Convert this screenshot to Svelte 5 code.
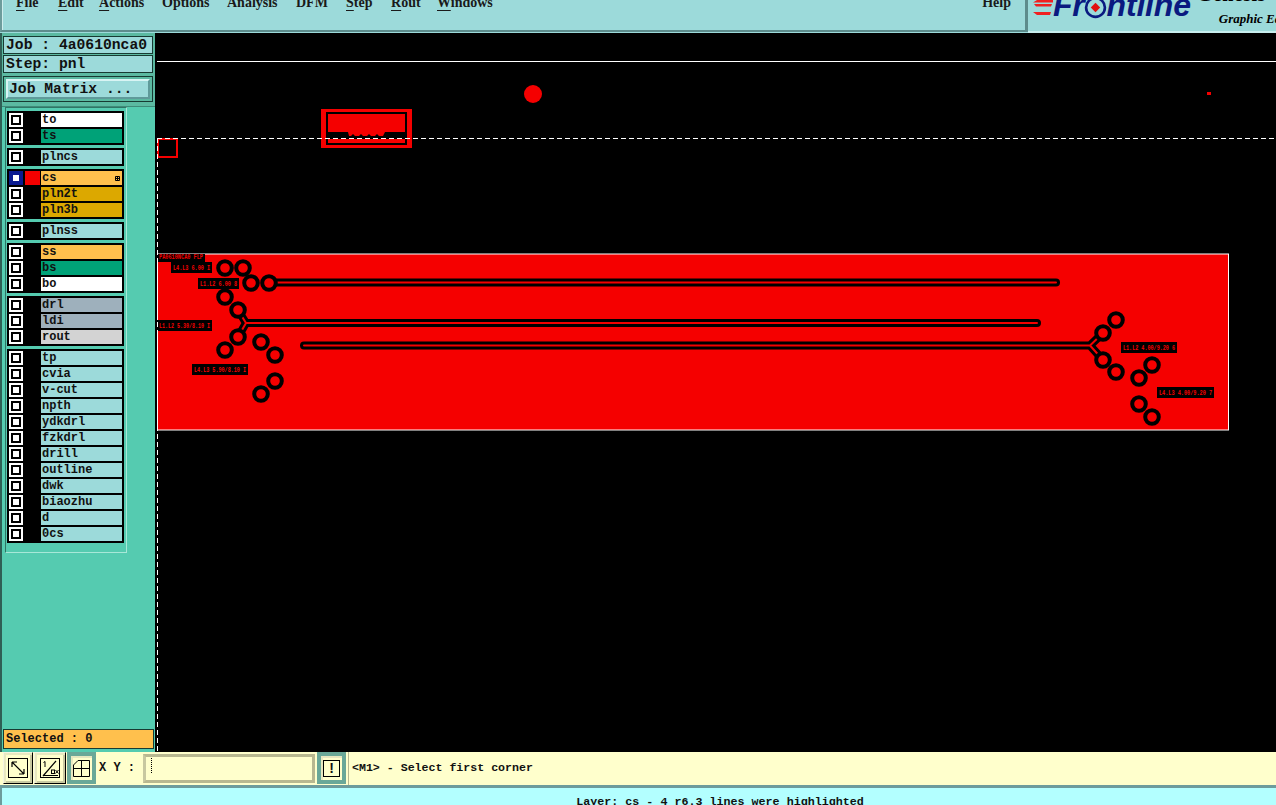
<script>
  const menus = [
    { t: 'File', u: true, w: 42 },
    { t: 'Edit', u: true, w: 41 },
    { t: 'Actions', u: true, w: 63 },
    { t: 'Options', u: false, w: 65 },
    { t: 'Analysis', u: false, w: 69 },
    { t: 'DFM', u: false, w: 50 },
    { t: 'Step', u: true, w: 45 },
    { t: 'Rout', u: true, w: 46 },
    { t: 'Windows', u: true, w: 90 }
  ];
  const groups = [
    [{ n: 'to', c: 'white' }, { n: 'ts', c: 'teal' }],
    [{ n: 'plncs', c: 'cyan' }],
    [{ n: 'cs', c: 'orange', active: true }, { n: 'pln2t', c: 'gold' }, { n: 'pln3b', c: 'gold' }],
    [{ n: 'plnss', c: 'cyan' }],
    [{ n: 'ss', c: 'orange' }, { n: 'bs', c: 'teal' }, { n: 'bo', c: 'white' }],
    [{ n: 'drl', c: 'slate' }, { n: 'ldi', c: 'slate' }, { n: 'rout', c: 'grey' }],
    ['tp', 'cvia', 'v-cut', 'npth', 'ydkdrl', 'fzkdrl', 'drill', 'outline', 'dwk', 'biaozhu', 'd', '0cs'].map((n) => ({ n, c: 'cyan' }))
  ];
  const pads = [
    [225, 268], [243, 268], [251, 283], [269, 283], [225, 297], [238, 310], [238, 337], [225, 350],
    [261, 342], [275, 355], [275, 381], [261, 394],
    [1116, 320], [1103, 333], [1103, 360], [1116, 372], [1152, 365], [1139, 378], [1139, 404], [1152, 417]
  ];
  const traces = [
    'M269 282.500H1056',
    'M238 310L246 323H1037M238 337L246 323',
    'M304 345.500H1090L1103 333M1090 345.500L1103 360'
  ];
  const labels = [
    { x: 157, y: 254, w: 48, h: 8, t: 'PA0610NCA0 FLP' },
    { x: 171, y: 262, w: 41, h: 11, t: 'L4.L3 6.00 I' },
    { x: 198, y: 278, w: 41, h: 11, t: 'L1.L2 6.00 8' },
    { x: 157, y: 320, w: 55, h: 11, t: 'L1.L2 5.30/8.10 I' },
    { x: 192, y: 364, w: 56, h: 11, t: 'L4.L3 5.90/8.10 I' },
    { x: 1121, y: 342, w: 56, h: 11, t: 'L1.L2 4.00/9.20 6' },
    { x: 1157, y: 387, w: 57, h: 11, t: 'L4.L3 4.00/9.20 7' }
  ];
</script>

<div class="app">
  <header class="top">
    <nav class="menubar">
      <div class="menus">
        {#each menus as m}
          <span class="menu" style="width:{m.w}px">{#if m.u}<u>{m.t[0]}</u>{m.t.slice(1)}{:else}{m.t}{/if}</span>
        {/each}
      </div>
      <span class="menu help">Help</span>
    </nav>
    <div class="brand">
      <svg class="stripes" width="20" height="20" viewBox="0 0 20 20">
        <path d="M4 0H20V2.500H0ZM1 4H19L18 6.500H3ZM0 12H18L17 15H4Z" fill="#f02020" />
      </svg>
      <span class="front">Fr<svg class="target" width="23" height="23" viewBox="0 0 22 22"><circle cx="11" cy="11" r="9" fill="none" stroke="#0a1a80" stroke-width="2.500" /><path d="M11 6.500L15.500 11L11 15.500L6.500 11Z" fill="#e01010" /></svg>ntline</span>
      <div class="brandtext">
        <span class="genesis">Genesis</span>
        <span class="graphic">Graphic Editor</span>
      </div>
    </div>
  </header>

  <main class="middle">
    <aside class="side">
      <div class="jobhead">
        <div class="info">Job : 4a0610nca0</div>
        <div class="info">Step: pnl</div>
        <div class="matrixframe"><button class="matrix">Job Matrix ...</button></div>
      </div>
      <div class="layerarea">
        <div class="panel">
          {#each groups as g}
            <div class="group">
              {#each g as r}
                <div class="row">
                  <span class="check" class:on={r.active}><i></i></span>
                  <span class="swatch" class:red={r.active}></span>
                  <span class="name {r.c}">{r.n}{#if r.active}<svg class="mini" width="5" height="5" viewBox="0 0 5 5"><path d="M.5.5h4v4h-4zM2.500.5v4M.5 2.500h4" fill="none" stroke="#000" /></svg>{/if}</span>
                </div>
              {/each}
            </div>
          {/each}
        </div>
      </div>
      <div class="selected">Selected : 0</div>
    </aside>

    <svg class="canvas" viewBox="157 33 1119 719" width="1119" height="719">
      <rect x="157" y="33" width="1119" height="719" fill="#000" />
      <path d="M157 61.500H1276" stroke="#fff" />
      <circle cx="533" cy="94" r="9" fill="#f50000" />
      <rect x="1207" y="92" width="4" height="3" fill="#f50000" />

      <path fill-rule="evenodd" d="M321 109H412V148H321ZM326 112V145H407V112Z" fill="#f50000" />
      <rect x="328" y="114" width="77" height="18" fill="#f50000" />
      <path d="M348 132h37l-2 4h-4l-2-2-2 2h-4l-2-2-2 2h-4l-2-2-2 2h-4l-2-2-2 2h-2Z" fill="#f50000" />
      <rect x="328" y="139" width="77" height="4" fill="#f50000" />
      <rect x="158" y="139" width="19" height="18" fill="none" stroke="#f50000" stroke-width="2" />

      <rect x="157.500" y="254" width="1071" height="176" fill="#f50000" stroke="#fff" />
      {#each traces as d}
        <path {d} fill="none" stroke="#000" stroke-width="8" stroke-linecap="round" />
        <path {d} fill="none" stroke="#f50000" stroke-width="2" stroke-linecap="round" />
      {/each}
      {#each pads as [x, y]}
        <circle cx={x} cy={y} r="6.800" fill="#f50000" stroke="#000" stroke-width="4" />
      {/each}
      {#each labels as l}
        <rect x={l.x} y={l.y} width={l.w} height={l.h} fill="#000" />
        <text class="tag" x={l.x + 2} y={l.y + l.h - 3} textLength={l.w - 4} lengthAdjust="spacingAndGlyphs">{l.t}</text>
      {/each}

      <path d="M157 138.500H1276M157.500 138V752" stroke="#fff" stroke-dasharray="5 3" />
    </svg>
  </main>

  <section class="cmd">
    <button class="tool plain">
      <svg width="20" height="20" viewBox="0 0 20 20"><rect x=".5" y=".5" width="19" height="19" fill="none" stroke="#000" /><path d="M4 4L16 16M4 4h5M4 4v5M16 16h-5M16 16v-5" fill="none" stroke="#000" stroke-width="1.200" /></svg>
    </button>
    <button class="tool plain second">
      <svg width="20" height="20" viewBox="0 0 20 20"><rect x=".5" y=".5" width="19" height="19" fill="none" stroke="#000" /><path d="M3 18L16 3M3 17.500H18" fill="none" stroke="#000" stroke-width="1.200" /><path d="M5 3.500V9M3.500 4.500L5 3.500" fill="none" stroke="#000" /><rect x="11.500" y="12" width="3" height="3.500" fill="none" stroke="#000" /><path d="M15.500 12l3 3.500M18.500 12l-3 3.500" stroke="#000" /></svg>
    </button>
    <button class="tool active">
      <svg width="17" height="17" viewBox="0 0 17 17"><path d="M5 .5H16.500V16.500H.5V5ZM8.500 .5V16.500M.5 8.500H16.500" fill="none" stroke="#000" /></svg>
    </button>
    <span class="xy">X Y :</span>
    <div class="input"><span class="caret"></span></div>
    <button class="tool active bang"><span>!</span></button>
    <div class="message">&lt;M1&gt; - Select first corner</div>
  </section>

  <footer class="status"><span>Layer: cs - 4 r6.3 lines were highlighted</span></footer>
</div>

<style>
  :global(body) { margin: 0; background: #000; overflow: hidden; }
  .app {
    width: 1276px; height: 805px; overflow: hidden;
    display: flex; flex-direction: column;
    font-family: "Liberation Mono", monospace; font-weight: 700; color: #111;
  }
  button { font: inherit; color: inherit; margin: 0; padding: 0; }

  .top { height: 33px; flex: none; display: flex; background: #9cdada; overflow: hidden; }
  .menubar {
    width: 1028px; flex: none; box-sizing: border-box; display: flex; justify-content: space-between;
    border-left: 2px solid #6d9c9c; border-right: 3px solid #5d8c8c; border-bottom: 2px solid #5d8c8c;
    box-shadow: inset 1px 0 #cfeeee;
    padding: 0 14px 0 14px; margin-bottom: 1px;
  }
  .menus { display: flex; }
  .menu {
    font: 700 14px/16px "Liberation Serif", serif; color: #1a1a1a;
    margin-top: -5px; height: 16px; white-space: nowrap; flex: none;
  }
  .menu u { text-underline-offset: 3px; }
  .brand { flex: 1; min-width: 0; overflow: hidden; display: flex; background: #9cdada; border-bottom: 2px solid #c8eeee; padding-left: 5px; }
  .stripes { flex: none; }
  .front {
    font: italic 700 32px/30px "Liberation Sans", sans-serif; color: #0a1a80;
    margin-top: -10px; height: 30px; white-space: nowrap; display: flex; align-items: center; letter-spacing: -.2px; flex: none;
  }
  .target { margin: 5px 0 0 -1px; }
  .brandtext { display: flex; flex-direction: column; margin-left: 6px; flex: none; }
  .genesis { font: 700 20px/20px "Liberation Serif", serif; color: #000; margin-top: -16px; letter-spacing: .5px; }
  .graphic { font: italic 700 13px/16px "Liberation Serif", serif; color: #000; margin: 7px 0 0 22px; white-space: nowrap; }

  .middle { height: 719px; flex: none; display: flex; }
  .canvas { display: block; flex: none; }

  .side {
    width: 157px; flex: none; display: flex; flex-direction: column; background: #55cbb0; box-sizing: border-box;
    border-left: 2px solid #2f5f55; border-right: 2px solid #000;
  }
  .jobhead { background: #5bb9a1; height: 74px; flex: none; padding: 3px 2px 0 1px; box-sizing: border-box; border-bottom: 1px solid #3e8a78; }
  .info {
    height: 18px; box-sizing: border-box; background: #9cdada; border: 1px solid #173a32; margin-bottom: 1px;
    font-size: 14.700px; line-height: 17px; padding-left: 2px; white-space: nowrap;
  }
  .matrixframe { border: 1px solid #173a32; height: 26px; box-sizing: border-box; margin-top: 3px; padding: 2px; }
  .matrix {
    display: block; width: 100%; height: 20px; box-sizing: border-box; text-align: left; background: #9cdada;
    font-size: 14.700px; line-height: 16px; padding-left: 1px;
    border: 2px solid; border-color: #d8f4f4 #5f9a9a #5f9a9a #d8f4f4;
  }
  .layerarea { flex: 1; min-height: 0; padding-left: 3px; }
  .panel {
    width: 122px; height: 446px; box-sizing: border-box; background: #55cbb0;
    border: 1px solid; border-color: #2f7565 #a8e8d8 #a8e8d8 #2f7565;
    padding: 3px 2px 0 1px; display: flex; flex-direction: column; gap: 3px;
  }
  .group { background: #000; padding: 2px; display: flex; flex-direction: column; gap: 2px; }
  .row { display: flex; height: 14px; font-size: 12px; line-height: 14px; }
  .check { width: 14px; height: 14px; flex: none; box-sizing: border-box; background: #fff; padding: 2px; }
  .check i { display: block; width: 10px; height: 10px; box-sizing: border-box; background: #fff; border: 2px solid #000; }
  .check.on { background: #0a1a90; padding: 2px; }
  .check.on i { border-color: #0a1a90; }
  .swatch { width: 15px; margin: 0 1px 0 2px; flex: none; }
  .swatch.red { background: #f50000; }
  .name { flex: 1; position: relative; padding-left: 1px; }
  .mini { position: absolute; right: 2px; top: 5px; }
  .white { background: #fff; }
  .teal { background: #00a278; }
  .cyan { background: #9cdada; }
  .orange { background: #ffc04d; }
  .gold { background: #dca800; }
  .slate { background: #9eb0bc; }
  .grey { background: #d3d3d3; }
  .selected {
    height: 20px; flex: none; box-sizing: border-box; margin: 0 1px 3px 1px; background: #ffc04d;
    border: 1px solid #173a32; font-size: 12px; line-height: 18px; padding-left: 2px;
  }

  .cmd { height: 33px; flex: none; display: flex; background: #ffffcc; box-sizing: border-box; padding-left: 3px; align-items: stretch; }
  .tool { width: 30px; height: 32px; box-sizing: border-box; flex: none; display: flex; align-items: center; justify-content: center; background: #ffffcc; }
  .plain { border: 1px solid; border-color: #f4f4e0 #000 #000 #f4f4e0; box-shadow: inset 2px 2px #e8e8c0, inset -2px -2px #c8c8a0; }
  .second { margin-left: 1px; width: 32px; }
  .active { border: 4px solid #6aa898; margin-left: 1px; width: 29px; box-shadow: inset 2px 2px #e8e8c0; }
  .xy { width: 47px; flex: none; font-size: 12px; line-height: 32px; padding-left: 3px; box-sizing: border-box; }
  .input {
    width: 172px; height: 29px; flex: none; box-sizing: border-box; margin-top: 2px; position: relative;
    border: 3px solid; border-color: #b8b890 #b8b890 #b8b890 #c8c8a0; background: #ffffcc;
  }
  .caret { position: absolute; left: 5px; top: 1px; width: 1px; height: 15px; background: repeating-linear-gradient(#000 0 1px, transparent 1px 2px); }
  .bang { margin-left: 2px; }
  .bang span { width: 15px; height: 15px; border: 1px solid #000; font: 700 14px/15px "Liberation Sans", sans-serif; text-align: center; display: block; }
  .message { flex: 1; margin-left: 2px; padding-left: 3px; font-size: 11.600px; line-height: 32px; border-left: 1px solid #b8b890; }

  .status {
    height: 20px; flex: none; box-sizing: border-box; background: #b3ffff; border-top: 3px solid #6d9c9c; border-left: 2px solid #6d9c9c;
    text-align: center; padding-left: 162px; font-size: 11.700px; line-height: 17px; padding-top: 6px; overflow: hidden;
  }
  .tag { font: 700 7px "Liberation Mono", monospace; fill: #f50000; }
</style>
